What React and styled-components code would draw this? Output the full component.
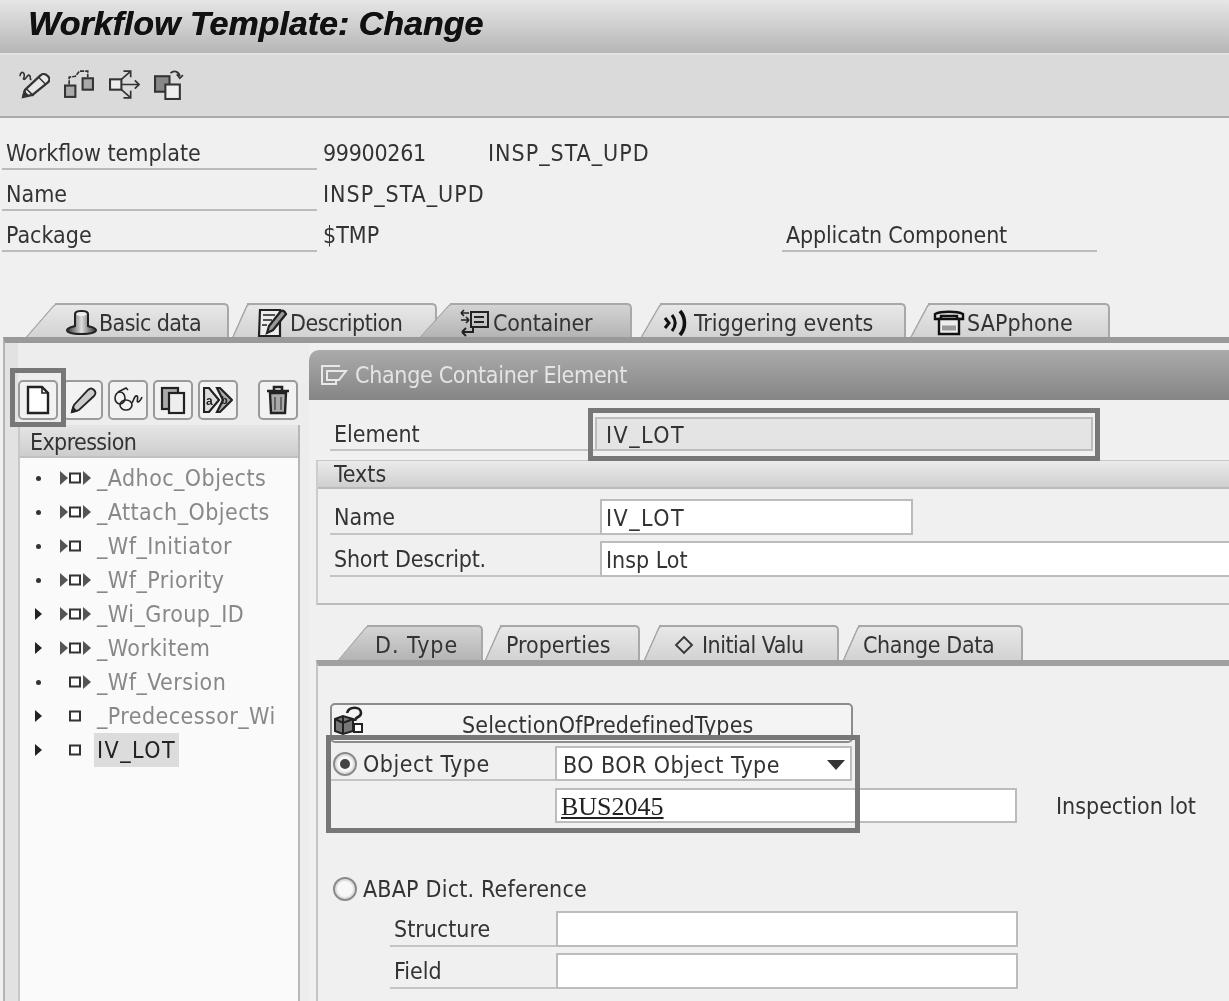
import React from 'react';
import styled, { createGlobalStyle } from 'styled-components';

const GlobalStyle = createGlobalStyle`
  html, body {
    margin: 0;
    padding: 0;
    background: #f0f0f0;
  }
  * { box-sizing: border-box; }
`;

const Page = styled.div`
  width: 1229px;
  height: 1001px;
  overflow: hidden;
  background: #f0f0f0;
  color: #333;
  font-family: "DejaVu Sans Condensed", "DejaVu Sans", sans-serif;
  font-stretch: condensed;
  font-size: 23px;
  filter: blur(0.45px);
`;

const Spaced = styled.span`
  letter-spacing: ${p => p.$ls}px;
`;

const TitleBar = styled.div`
  height: 55px;
  padding: 4px 0 0 28px;
  background: linear-gradient(#e6e6e6, #b6b6b6);
  border-bottom: 2px solid #e4e4e4;
  font-family: "Liberation Sans", Arial, sans-serif;
  font-stretch: normal;
  font-weight: bold;
  font-style: italic;
  font-size: 34px;
  color: #111;
  text-shadow: 0.4px 0 0 #111;
`;

const Toolbar = styled.div`
  height: 63px;
  display: flex;
  align-items: center;
  gap: 14px;
  padding: 0 0 3px 19px;
  background: #dadada;
  border-bottom: 2px solid #aaa;
`;

const HeaderForm = styled.div`
  padding-top: 11px;
`;

const HeaderRow = styled.div`
  display: flex;
  height: 41px;
`;

const HeaderLabel = styled.div`
  width: 315px;
  margin-left: 2px;
  padding: 11px 0 0 4px;
  border-bottom: 2px solid #bbb;
`;

const HeaderValue = styled.div`
  padding-top: 11px;
  margin-left: ${p => p.$left || 0}px;
  width: ${p => p.$w}px;
`;

const CompLabel = styled(HeaderLabel)`
  margin-left: 0;
`;

const TabStrip = styled.div`
  display: flex;
  height: ${p => p.$h}px;
  padding-left: ${p => p.$left}px;
  margin-top: ${p => p.$top}px;
`;

const Tab = styled.div`
  position: relative;
  z-index: ${p => p.$z};
  flex: none;
  display: flex;
  align-items: center;
  gap: ${p => p.$iconGap ?? 2}px;
  width: ${p => p.$w}px;
  margin-left: ${p => p.$gap}px;
  padding-left: ${p => p.$pad}px;
  padding-top: 3px;
  white-space: nowrap;
  border-top: 2px solid #a8a8a8;
  border-right: 2px solid #a8a8a8;
  border-radius: 0 5px 0 0;
  background: ${p => p.$active
    ? 'linear-gradient(#d4d4d4, #b4b4b4)'
    : 'linear-gradient(#e8e8e8, #d2d2d2)'};

  &::before {
    content: '';
    position: absolute;
    z-index: -1;
    top: -2px;
    bottom: 0;
    left: 0;
    width: 36px;
    transform-origin: top left;
    transform: skewX(${p => p.$slant}deg);
    background: inherit;
    border-left: 2px solid #a8a8a8;
    border-top: 2px solid #a8a8a8;
    border-radius: 4px 0 0 0;
  }
`;

const Main = styled.div`
  display: flex;
  height: 664px;
  margin-left: 3px;
  border-top: 6px solid #999;
  border-left: 2px solid #b4b4b4;
`;

const LeftColumn = styled.div`
  flex: none;
  width: 304px;
  padding: 37px 0 0 13px;
  background: linear-gradient(90deg, #e2e2e2 13px, #ededed 13px);
`;

const ButtonRow = styled.div`
  position: relative;
  display: flex;
  gap: 5px;
`;

const IconButton = styled.div`
  width: 40px;
  height: 40px;
  display: flex;
  align-items: center;
  justify-content: center;
  margin-left: ${p => p.$gap || 0}px;
  background: #f2f2f2;
  border: 2px solid #9a9a9a;
  border-radius: 5px;
`;

const Highlight = styled.div`
  position: absolute;
  top: ${p => p.$top}px;
  left: ${p => p.$left}px;
  width: ${p => p.$w}px;
  height: ${p => p.$h}px;
  border: 5px solid #777;
  pointer-events: none;
`;

const Tree = styled.div`
  width: 282px;
  height: 100%;
  margin-top: 5px;
  background: #fafafa;
  border-left: 2px solid #c8c8c8;
  border-right: 2px solid #b8b8b8;
`;

const TreeHeader = styled.div`
  height: 33px;
  padding: 4px 0 0 10px;
  letter-spacing: -0.6px;
  background: linear-gradient(#e6e6e6, #cdcdcd);
  border-bottom: 2px solid #c0c0c0;
`;

const TreeBody = styled.div`
  padding-top: 3px;
`;

const TreeRow = styled.div`
  display: flex;
  align-items: center;
  height: 34px;
  padding-left: 15px;
`;

const Expander = styled.div`
  width: 22px;
  display: flex;
  align-items: center;
`;

const Dot = styled.span`
  width: 5px;
  height: 5px;
  margin-left: 1px;
  border-radius: 50%;
  background: #333;
`;

const Arrow = styled.span`
  width: 0;
  height: 0;
  border-left: 7px solid #222;
  border-top: 6px solid transparent;
  border-bottom: 6px solid transparent;
`;

const NodeIcons = styled.div`
  flex: none;
  width: 40px;
  padding-left: 2px;
  display: flex;
`;

const TreeText = styled.span`
  padding: 0 3px;
  margin-left: -3px;
  line-height: 34px;
  letter-spacing: ${p => (p.$selected ? 1.5 : 0.45)}px;
  color: ${p => (p.$selected ? '#222' : '#888')};
  background: ${p => (p.$selected ? '#dcdcdc' : 'transparent')};
`;

const Editor = styled.div`
  flex: 1;
  min-width: 0;
  margin-top: 7px;
  background: #f0f0f0;
`;

const EditorHeader = styled.div`
  height: 50px;
  display: flex;
  align-items: center;
  gap: 5px;
  padding: 0 0 0 11px;
  letter-spacing: -0.3px;
  color: #e4e4e4;
  background: linear-gradient(#ababab, #858585);
  border-radius: 10px 0 0 0;
`;

const FormRow = styled.div`
  display: flex;
  align-items: flex-end;
  height: ${p => p.$h || 36}px;
  margin-top: ${p => p.$top || 0}px;
  padding-left: ${p => p.$left || 0}px;
`;

const RadioRow = styled(FormRow)`
  align-items: center;
`;

const FieldLabel = styled.div`
  display: flex;
  align-items: center;
  flex: none;
  width: ${p => p.$w}px;
  height: 100%;
  padding-top: 2px;
  padding-left: ${p => p.$pad ?? 4}px;
  border-bottom: 2px solid #c4c4c4;
`;

const Input = styled.div`
  flex: none;
  height: 100%;
  width: ${p => p.$w}px;
  padding: 2px 5px 0 ${p => p.$pad ?? 4}px;
  display: flex;
  align-items: center;
  justify-content: space-between;
  background: ${p => (p.$readOnly ? '#e4e4e4' : '#fff')};
  border: 2px solid #bcbcbc;
`;

const Underlined = styled.span`
  font-family: "Liberation Serif", "DejaVu Serif", serif;
  font-size: 26px;
  font-stretch: normal;
  color: #222;
  text-decoration: underline;
`;

const Marked = styled.div`
  position: relative;
`;

const TextsGroup = styled.div`
  margin: 9px 0 0 7px;
  height: 145px;
  border-left: 2px solid #ccc;
  border-bottom: 2px solid #bcbcbc;
`;

const GroupHeader = styled.div`
  height: 29px;
  padding-left: 16px;
  background: linear-gradient(#ebebeb, #cfcfcf);
  border-top: 1px solid #c8c8c8;
  border-bottom: 2px solid #bbb;
`;

const SubPanel = styled.div`
  margin-left: 7px;
  height: 400px;
  padding-top: 37px;
  border-top: 6px solid #a0a0a0;
  border-left: 2px solid #c4c4c4;
`;

const WideButton = styled.div`
  position: relative;
  width: 523px;
  height: 40px;
  margin-left: 12px;
  padding: 7px 0 0 130px;
  letter-spacing: 0.15px;
  background: #f4f4f4;
  border: 2px solid #8c8c8c;
  border-radius: 5px;
  white-space: nowrap;
`;

const ButtonIcon = styled.svg`
  position: absolute;
  left: 1px;
  top: 1px;
`;

const Radio = styled.span`
  flex: none;
  width: 24px;
  height: 24px;
  margin-right: 6px;
  display: flex;
  align-items: center;
  justify-content: center;
  border: 2px solid #8a8a8a;
  border-radius: 50%;
  background: #f8f8f8;
  box-shadow: inset 0 0 0 2px #e0e0e0;

  &::after {
    content: '';
    width: 10px;
    height: 10px;
    border-radius: 50%;
    background: ${p => (p.$on ? '#444' : 'transparent')};
  }
`;

const Note = styled.span`
  margin: 0 0 4px 39px;
  white-space: nowrap;
`;

const ToolIcon = ({ children }) => (
  <svg width="31" height="31" viewBox="0 0 30 30" fill="none" stroke="#333" strokeWidth="1.6">
    {children}
  </svg>
);

const BtnIcon = ({ children }) => (
  <svg width="30" height="30" viewBox="0 0 30 30" fill="none" stroke="#222" strokeWidth="2">
    {children}
  </svg>
);

const NodeIcon = ({ left, right }) => (
  <svg width="34" height="14" viewBox="0 0 34 14">
    {left && <path d="M1 0l8 7-8 7z" fill="#555" />}
    <rect x="11" y="2.5" width="10" height="9" fill="#fff" stroke="#333" strokeWidth="2" />
    {right && <path d="M24 0l8 7-8 7z" fill="#555" />}
  </svg>
);

const treeItems = [
  { name: '_Adhoc_Objects', left: true, right: true },
  { name: '_Attach_Objects', left: true, right: true },
  { name: '_Wf_Initiator', left: true },
  { name: '_Wf_Priority', left: true, right: true },
  { name: '_Wi_Group_ID', left: true, right: true, open: true },
  { name: '_Workitem', left: true, right: true, open: true },
  { name: '_Wf_Version', right: true },
  { name: '_Predecessor_Wi', open: true },
  { name: 'IV_LOT', open: true, selected: true },
];

export default function App() {
  return (
    <Page>
      <GlobalStyle />
      <TitleBar>Workflow Template: Change</TitleBar>
      <Toolbar>
        <ToolIcon>
          <path d="M4 27l2-7L21 6c2-2 5-1 7 1s2 4 0 6L13 25z" fill="#e8e8e8" strokeWidth="2.2" />
          <path d="M7 19l7 7M19 8l7 7" strokeWidth="1.4" />
          <path d="M4 26l4-1-3-3z" fill="#222" />
          <path d="M1 7c0-4 3-5 4-2s-2 5 0 5 3-5 5-4 0 5 2 4" strokeWidth="1.6" />
        </ToolIcon>
        <ToolIcon>
          <rect x="1" y="16" width="10" height="11" fill="#aaa" strokeWidth="2" />
          <rect x="18" y="9" width="10" height="11" fill="#aaa" strokeWidth="2" />
          <path d="M5 15V8l6-1 4-5h8v6" strokeDasharray="4 1" />
        </ToolIcon>
        <ToolIcon>
          <rect x="1" y="10" width="11" height="10" fill="#eee" strokeWidth="2" />
          <path d="M12 15h17M25 11l4 4-4 4M12 10l8-7M14 2h7v6M12 20l8 7M21 21v7h-7" />
        </ToolIcon>
        <ToolIcon>
          <rect x="1" y="7" width="14" height="15" fill="#888" strokeWidth="2" />
          <rect x="11" y="15" width="14" height="14" fill="#eee" strokeWidth="2" />
          <path d="M16 4c3-3 8-2 9 3M22 5l3 4 3-3" />
        </ToolIcon>
      </Toolbar>

      <HeaderForm>
        <HeaderRow>
          <HeaderLabel>Workflow template</HeaderLabel>
          <HeaderValue $left={6} $w={165}><Spaced $ls={-0.3}>99900261</Spaced></HeaderValue>
          <HeaderValue><Spaced $ls={1}>INSP_STA_UPD</Spaced></HeaderValue>
        </HeaderRow>
        <HeaderRow>
          <HeaderLabel>Name</HeaderLabel>
          <HeaderValue $left={6}><Spaced $ls={1}>INSP_STA_UPD</Spaced></HeaderValue>
        </HeaderRow>
        <HeaderRow>
          <HeaderLabel>Package</HeaderLabel>
          <HeaderValue $left={6} $w={459}>$TMP</HeaderValue>
          <CompLabel><Spaced $ls={-0.15}>Applicatn Component</Spaced></CompLabel>
        </HeaderRow>
      </HeaderForm>

      <TabStrip $h={34} $left={55} $top={51}>
        <Tab $w={174} $gap={0} $pad={10} $z={5} $slant={-41}>
          <svg width="32" height="28" viewBox="0 0 32 28">
            <defs>
              <linearGradient id="hat" x1="0" x2="1" y1="0" y2="0">
                <stop offset="0" stopColor="#333" />
                <stop offset="0.5" stopColor="#ddd" />
                <stop offset="1" stopColor="#333" />
              </linearGradient>
            </defs>
            <path d="M2 21c1-3 6-3 8-4V5c0-4 13-4 13 0v12c2 1 7 1 8 4 0 3-7 4-15 4S2 24 2 21z" fill="url(#hat)" stroke="#222" strokeWidth="2" />
            <ellipse cx="16.5" cy="5" rx="5" ry="2" fill="#eee" />
          </svg>
          <Spaced $ls={-0.6}>Basic data</Spaced>
        </Tab>
        <Tab $w={190} $gap={18} $pad={9} $z={4} $slant={-24}>
          <svg width="32" height="30" viewBox="0 0 32 30" fill="none" stroke="#222" strokeWidth="2.2">
            <path d="M4 2h20v26H3z" fill="#eee" />
            <path d="M7 7h12M7 12h9M6 17h5" strokeWidth="1.4" />
            <path d="M11 25l2-7L25 3c2-1 4 1 5 3L17 22z" fill="#999" />
          </svg>
          <Spaced $ls={-0.5}>Description</Spaced>
        </Tab>
        <Tab $w={182} $gap={13} $pad={9} $z={6} $active $slant={-42}>
          <svg width="32" height="30" viewBox="0 0 32 30" fill="none" stroke="#222" strokeWidth="2">
            <path d="M12 4h17v15H12zM15 9h10M15 14h10" />
            <path d="M2 5h8M2 5l3-3M2 5l3 3M10 12H2M10 12l-3-3M10 12l-3 3" strokeWidth="1.6" />
            <path d="M14 19v5H3M3 24l4-4M3 24l4 4" strokeWidth="2" />
          </svg>
          <Spaced $ls={-0.2}>Container</Spaced>
        </Tab>
        <Tab $w={246} $gap={28} $pad={2} $z={3} $slant={-30}>
          <svg width="30" height="30" viewBox="0 0 30 30" fill="none" stroke="#111">
            <path d="M3 10l4 5-4 5" strokeWidth="3" />
            <path d="M10 7c4 5 4 11 0 16" strokeWidth="3" />
            <path d="M18 3c6 7 6 17 0 24" strokeWidth="3.6" />
          </svg>
          Triggering events
        </Tab>
        <Tab $w={182} $gap={22} $pad={5} $z={2} $slant={-28}>
          <svg width="32" height="26" viewBox="0 0 32 26" fill="none" stroke="#111" strokeWidth="2.4">
            <path d="M2 9V4c6-3 22-3 28 0v5h-6V6H8v3z" />
            <path d="M6 9h20v15H6z" fill="#eee" />
            <path d="M9 18h14" stroke="#999" strokeWidth="5" />
          </svg>
          <Spaced $ls={0.1}>SAPphone</Spaced>
        </Tab>
      </TabStrip>

      <Main>
        <LeftColumn>
          <ButtonRow>
            <IconButton>
              <BtnIcon>
                <path d="M5 2h14l6 6v20H5z" fill="#fff" strokeWidth="2.4" />
                <path d="M19 2v6h6" strokeWidth="1.6" />
              </BtnIcon>
            </IconButton>
            <IconButton>
              <BtnIcon>
                <path d="M4 27l2-7L20 5c2-2 4-2 6 0s2 4 0 6L11 25z" fill="#ccc" strokeWidth="1.8" />
                <path d="M4 27l4-1-3-3z" fill="#222" />
              </BtnIcon>
            </IconButton>
            <IconButton>
              <BtnIcon>
                <g strokeWidth="1.6">
                  <ellipse cx="7" cy="13" rx="5" ry="6" />
                  <ellipse cx="13" cy="20" rx="6" ry="5" />
                  <path d="M5 7l8-4 2 2" />
                  <path d="M19 18c2-4 3-8 5-7s-1 6 1 6 3-3 4-5" />
                </g>
              </BtnIcon>
            </IconButton>
            <IconButton>
              <BtnIcon>
                <rect x="4" y="3" width="16" height="21" fill="#aaa" strokeWidth="2.2" />
                <rect x="11" y="8" width="15" height="20" fill="#eee" strokeWidth="2.2" />
              </BtnIcon>
            </IconButton>
            <IconButton>
              <BtnIcon>
                <path d="M1 3h5l10 12L6 27H1z" fill="#ddd" strokeWidth="2.2" />
                <path d="M14 3h3l12 12-12 12h-3l6-12z" fill="#aaa" strokeWidth="2.2" />
                <text x="3" y="20" fontSize="12" fontWeight="bold" fill="#222" stroke="none" fontFamily="Liberation Sans, sans-serif">a</text>
                <text x="18" y="19" fontSize="11" fontWeight="bold" fill="#222" stroke="none" fontFamily="Liberation Sans, sans-serif">b</text>
              </BtnIcon>
            </IconButton>
            <IconButton $gap={15}>
              <BtnIcon>
                <path d="M7 8h16l-1 20H8z" fill="#aaa" strokeWidth="2.4" />
                <path d="M4 6h22M11 6V2h8v4" strokeWidth="2.6" />
                <path d="M12 12v13M18 12v13" stroke="#666" />
              </BtnIcon>
            </IconButton>
            <Highlight $top={-12} $left={-8} $w={56} $h={59} />
          </ButtonRow>
          <Tree>
            <TreeHeader>Expression</TreeHeader>
            <TreeBody>
              {treeItems.map(item => (
                <TreeRow key={item.name}>
                  <Expander>{item.open ? <Arrow /> : <Dot />}</Expander>
                  <NodeIcons><NodeIcon left={item.left} right={item.right} /></NodeIcons>
                  <TreeText $selected={item.selected}>{item.name}</TreeText>
                </TreeRow>
              ))}
            </TreeBody>
          </Tree>
        </LeftColumn>

        <Editor>
          <EditorHeader>
            <svg width="30" height="24" viewBox="0 0 30 24" fill="none" stroke="#e8e8e8" strokeWidth="2">
              <path d="M20 3H2v18h14v-4M7 8h12l7 0-7 9H7z" />
            </svg>
            Change Container Element
          </EditorHeader>

          <Marked>
            <FormRow $h={34} $top={17} $left={21}>
              <FieldLabel $w={265}>Element</FieldLabel>
              <Input $w={498} $pad={9} $readOnly><Spaced $ls={1.5}>IV_LOT</Spaced></Input>
            </FormRow>
            <Highlight $top={-9} $left={279} $w={512} $h={53} />
          </Marked>

          <TextsGroup>
            <GroupHeader>Texts</GroupHeader>
            <FormRow $top={10} $left={12}>
              <FieldLabel $w={270}>Name</FieldLabel>
              <Input $w={313}><Spaced $ls={1.5}>IV_LOT</Spaced></Input>
            </FormRow>
            <FormRow $top={6} $left={12}>
              <FieldLabel $w={270}><Spaced $ls={-0.2}>Short Descript.</Spaced></FieldLabel>
              <Input $w={700}>Insp Lot</Input>
            </FormRow>
          </TextsGroup>

          <TabStrip $h={35} $left={58} $top={20}>
            <Tab $w={116} $gap={0} $pad={8} $z={6} $active $slant={-40}><Spaced $ls={1}>D. Type</Spaced></Tab>
            <Tab $w={140} $gap={17} $pad={6} $z={4} $slant={-24}>Properties</Tab>
            <Tab $w={180} $gap={19} $pad={15} $iconGap={8} $z={3} $slant={-24}>
              <svg width="20" height="20" viewBox="0 0 20 20">
                <path d="M10 2l8 8-8 8-8-8z" fill="none" stroke="#333" strokeWidth="1.8" />
              </svg>
              <Spaced $ls={-0.5}>Initial Valu</Spaced>
            </Tab>
            <Tab $w={165} $gap={19} $pad={5} $z={2} $slant={-24}><Spaced $ls={-0.35}>Change Data</Spaced></Tab>
          </TabStrip>

          <SubPanel>
            <WideButton>
              <ButtonIcon width="32" height="30" viewBox="0 0 32 30" fill="none" stroke="#222" strokeWidth="2">
                <path d="M2 13l8-3 10 3v12l-10 3-8-3z" fill="#777" />
                <path d="M10 10v18M2 13l8 4 10-4" />
                <path d="M14 7c2-7 14-7 14 0 0 5-6 3-6 8" strokeWidth="2.6" />
                <path d="M21 18h8v8h-8z" fill="#fff" />
              </ButtonIcon>
              SelectionOfPredefinedTypes
            </WideButton>
            <Marked>
              <FormRow $h={35} $top={3} $left={12}>
                <FieldLabel $w={225} $pad={3}><Radio $on /><Spaced $ls={0.5}>Object Type</Spaced></FieldLabel>
                <Input $w={297} $pad={6}>
                  <Spaced $ls={0.45}>BO BOR Object Type</Spaced>
                  <svg width="18" height="10" viewBox="0 0 18 10">
                    <path d="M0 0h18L9 10z" fill="#333" />
                  </svg>
                </Input>
              </FormRow>
              <FormRow $h={35} $top={7} $left={237}>
                <Input $w={462}><Underlined>BUS2045</Underlined></Input>
                <Note>Inspection lot</Note>
              </FormRow>
              <Highlight $top={-11} $left={8} $w={534} $h={98} />
            </Marked>
            <RadioRow $top={48} $left={15}>
              <Radio /><Spaced $ls={0.2}>ABAP Dict. Reference</Spaced>
            </RadioRow>
            <FormRow $top={4} $left={72}>
              <FieldLabel $w={166}>Structure</FieldLabel>
              <Input $w={462} />
            </FormRow>
            <FormRow $top={6} $left={72}>
              <FieldLabel $w={166}>Field</FieldLabel>
              <Input $w={462} />
            </FormRow>
          </SubPanel>
        </Editor>
      </Main>
    </Page>
  );
}
